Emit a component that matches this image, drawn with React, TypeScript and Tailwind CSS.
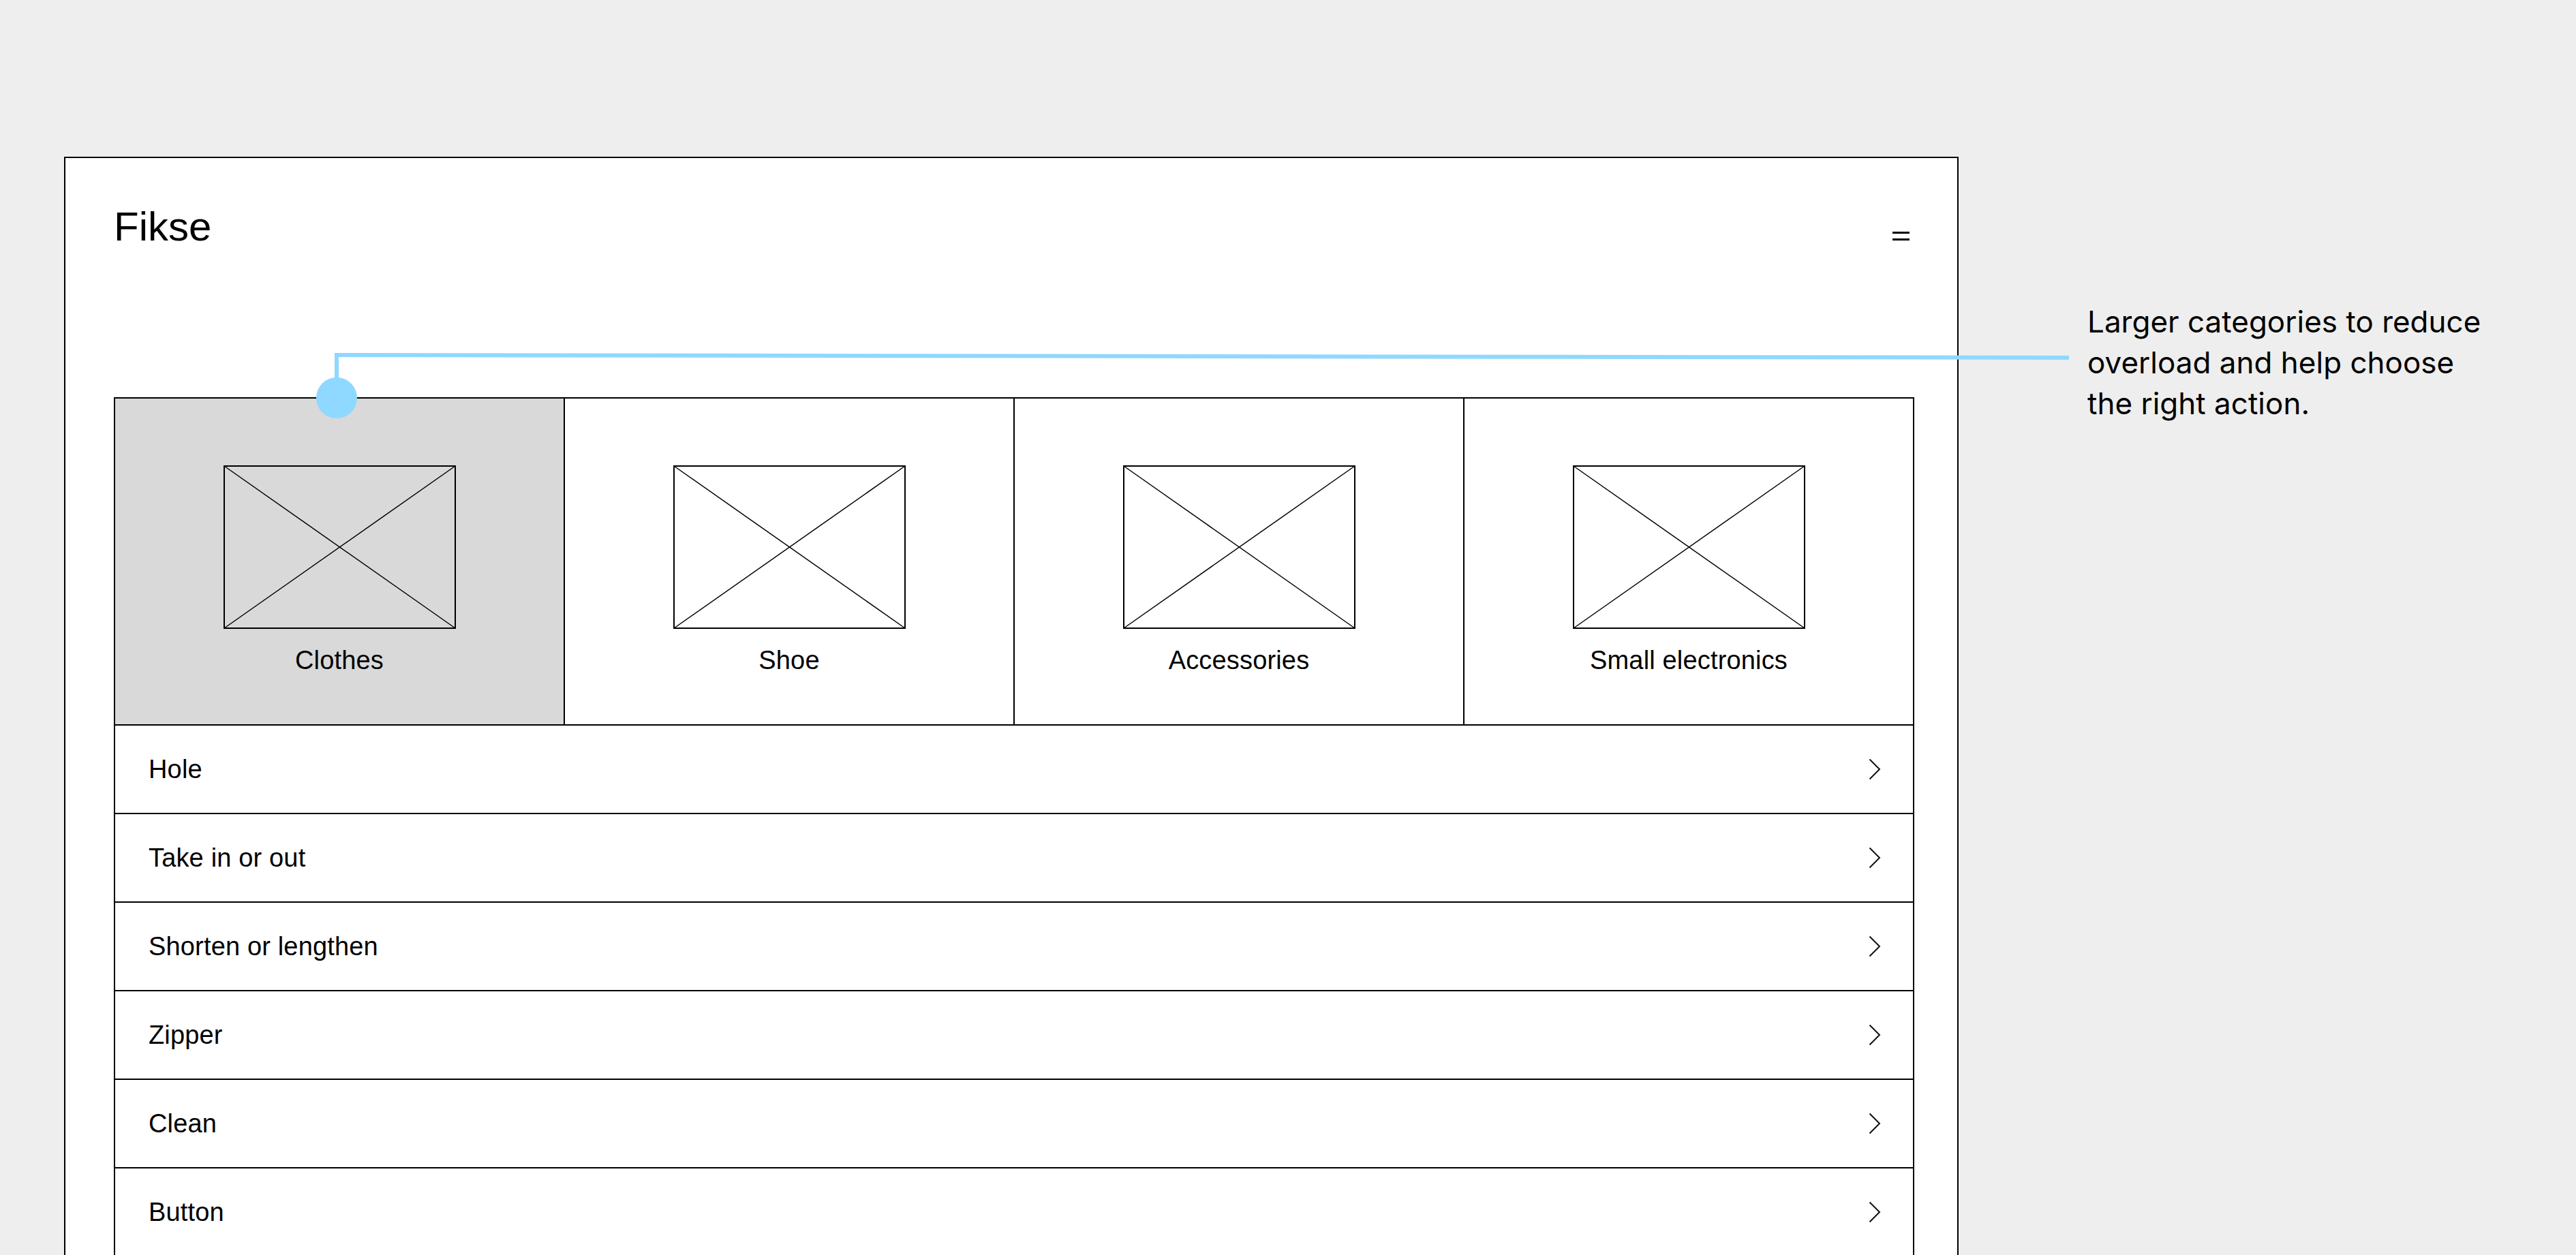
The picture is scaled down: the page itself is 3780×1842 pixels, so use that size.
import React from "react";

const categories = ["Clothes", "Shoe", "Accessories", "Small electronics"];
const actions = [
  "Hole",
  "Take in or out",
  "Shorten or lengthen",
  "Zipper",
  "Clean",
  "Button",
];

function Placeholder() {
  return (
    <svg width="341" height="240" viewBox="0 0 341 240" className="block">
      <rect x="1" y="1" width="339" height="238" fill="none" stroke="#000" strokeWidth="2" />
      <line x1="1" y1="1" x2="340" y2="239" stroke="#000" strokeWidth="1.5" />
      <line x1="340" y1="1" x2="1" y2="239" stroke="#000" strokeWidth="1.5" />
    </svg>
  );
}

function Chevron() {
  return (
    <svg width="18" height="32" viewBox="0 0 18 32" className="block">
      <polyline points="1.5,1.5 16,16 1.5,30.5" fill="none" stroke="#111" strokeWidth="2" />
    </svg>
  );
}

export default function App() {
  return (
    <div className="relative w-[3780px] h-[1842px] overflow-hidden bg-[#eeeeee] text-black">
      <div className="flex items-start pl-[94px] pt-[230px]">
        {/* wireframe */}
        <div
          className="w-[2780px] h-[1700px] shrink-0 border-2 border-black bg-white pl-[71px] pt-[71px] tracking-[0.01em]"
          style={{ fontFamily: "'Liberation Sans', Arial, sans-serif" }}
        >
          <div className="flex w-[2642px] items-start justify-between pr-[7px] mb-[220px]">
            <div className="text-[60px] leading-none tracking-normal">Fikse</div>
            <div className="mt-[37px] flex flex-col gap-[7px]">
              <div className="h-[3px] w-[25px] bg-black" />
              <div className="h-[3px] w-[25px] bg-black" />
            </div>
          </div>

          <div className="w-[2642px] border-2 border-black">
            <div className="flex h-[478px]">
              {categories.map((c, i) => (
                <div
                  key={c}
                  className={
                    i === 0
                      ? "flex flex-1 flex-col items-center border-r-2 border-black bg-[#d9d9d9] pt-[98px]"
                      : i < 3
                      ? "flex flex-1 flex-col items-center border-r-2 border-black pt-[98px]"
                      : "flex flex-1 flex-col items-center pt-[98px]"
                  }
                >
                  <Placeholder />
                  <div className="mt-[18px] text-[38px] leading-[57px]">{c}</div>
                </div>
              ))}
            </div>
            {actions.map((a) => (
              <div
                key={a}
                className="flex h-[130px] items-center justify-between border-t-2 border-black pl-[49px] pr-[47px]"
              >
                <span className="text-[38px] leading-[57px]">{a}</span>
                <Chevron />
              </div>
            ))}
          </div>
        </div>

        {/* note */}
        <div
          className="ml-[189px] mt-[212px] text-[44px] leading-[60px] whitespace-nowrap"
          style={{ fontFamily: "Inter, 'Liberation Sans', sans-serif" }}
        >
          Larger categories to reduce
          <br />
          overload and help choose
          <br />
          the right action.
        </div>
      </div>

      {/* connector */}
      <svg
        className="pointer-events-none absolute left-[460px] top-[510px] z-10"
        width="2590"
        height="110"
        viewBox="0 0 2590 110"
      >
        <polyline
          points="34,46 34,11 2576,15"
          fill="none"
          stroke="#8fd8ff"
          strokeWidth="6"
          strokeLinejoin="miter"
        />
        <circle cx="34" cy="74" r="30" fill="#8fd8ff" />
      </svg>
    </div>
  );
}
